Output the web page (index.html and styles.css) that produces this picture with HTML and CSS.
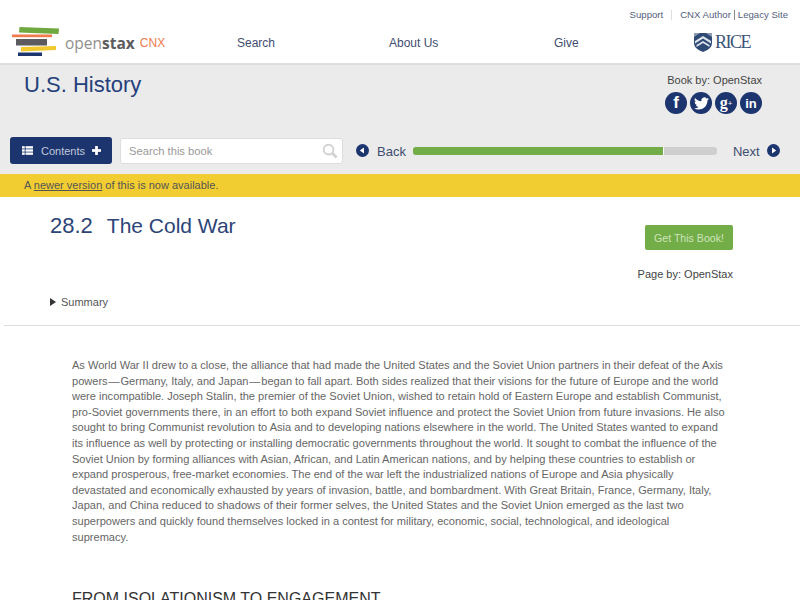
FILE: index.html
```html
<!DOCTYPE html>
<html lang="en">
<head>
  <meta charset="UTF-8">
  <title>The Cold War - U.S. History</title>
  <link rel="stylesheet" href="styles.css">
</head>
<body>

  <header class="site-header">
    <div class="top-links">
      <a href="#">Support</a>
      <span class="sep sep-light"></span>
      <a href="#">CNX Author</a>
      <span class="sep"></span>
      <a href="#">Legacy Site</a>
    </div>
    <div class="main-nav">
      <a class="logo" href="#">
        <svg class="logo-books" width="48" height="30" viewBox="0 0 48 30">
          <path d="M7.500 0 L47 1.500 L46.500 7 L7 5.500 Z" fill="#6fa83f"/>
          <rect x="0" y="7.500" width="40" height="2.700" fill="#ee7a4d"/>
          <rect x="4" y="12" width="31" height="6.500" fill="#5c5c60"/>
          <path d="M9 20 L44 19 L44 23 L9 24.500 Z" fill="#f2ca30"/>
          <rect x="6" y="25.500" width="24" height="3.500" fill="#1c356f"/>
        </svg>
        <span class="logo-open">open<b>stax</b></span>
        <span class="logo-cnx">CNX</span>
      </a>
      <nav class="nav-links">
        <a href="#">Search</a>
        <a href="#">About Us</a>
        <a href="#">Give</a>
      </nav>
      <a class="rice" href="#">
        <svg width="18" height="19" viewBox="0 0 18 19">
          <path d="M0 0 H18 V10 Q18 16 9 19 Q0 16 0 10 Z" fill="#2f4a75"/>
          <path d="M0 0 L6 0 L0 4 Z M18 0 L12 0 L18 4 Z" fill="#8d9db3"/>
          <path d="M1 8 L9 3 L17 8 V10.500 L9 5.500 L1 10.500 Z" fill="#dfe5ec"/>
          <path d="M2.500 12 L9 8 L15.500 12 V14 L9 10 L2.500 14 Z" fill="#dfe5ec"/>
        </svg>
        <span>RICE</span>
      </a>
    </div>
  </header>

  <section class="book-head">
    <h1>U.S. History</h1>
    <div class="book-by">
      <div>Book by: OpenStax</div>
      <div class="social">
        <a href="#">f</a>
        <a href="#">
          <svg width="15" height="15" viewBox="0 0 24 24" fill="#fff">
            <path d="M23.953 4.570a10 10 0 01-2.825.775 4.958 4.958 0 002.163-2.723c-.951.555-2.005.959-3.127 1.184a4.920 4.920 0 00-8.384 4.482C7.690 8.095 4.067 6.130 1.640 3.162a4.822 4.822 0 00-.666 2.475c0 1.710.870 3.213 2.188 4.096a4.904 4.904 0 01-2.228-.616v.060a4.923 4.923 0 003.946 4.827 4.996 4.996 0 01-2.212.085 4.936 4.936 0 004.604 3.417 9.867 9.867 0 01-6.102 2.105c-.390 0-.779-.023-1.170-.067a13.995 13.995 0 007.557 2.209c9.053 0 13.998-7.496 13.998-13.985 0-.210 0-.420-.015-.630A9.935 9.935 0 0024 4.590z"/>
          </svg>
        </a>
        <a href="#" class="gp">g<sup>+</sup></a>
        <a href="#" class="in">in</a>
      </div>
    </div>
  </section>

  <section class="toolbar">
    <button class="contents-btn">
      <svg width="11" height="9" viewBox="0 0 14 11" fill="#fff">
        <rect width="3.500" height="3"/><rect x="4.500" width="9.500" height="3"/>
        <rect y="4" width="3.500" height="3"/><rect x="4.500" y="4" width="9.500" height="3"/>
        <rect y="8" width="3.500" height="3"/><rect x="4.500" y="8" width="9.500" height="3"/>
      </svg>
      <span>Contents</span>
      <svg width="9" height="9" viewBox="0 0 10 10" fill="#fff">
        <rect x="3.500" width="3" height="10"/><rect y="3.500" width="10" height="3"/>
      </svg>
    </button>
    <div class="book-search">
      <span>Search this book</span>
      <svg width="16" height="16" viewBox="0 0 17 17" fill="none" stroke="#d2d2d2">
        <circle cx="7" cy="7" r="5.200" stroke-width="2"/>
        <path d="M11 11 L15.500 15.500" stroke-width="3"/>
      </svg>
    </div>
    <a class="pager back" href="#">
      <svg width="13" height="13" viewBox="0 0 13 13">
        <circle cx="6.500" cy="6.500" r="6.500" fill="#1c356f"/>
        <path d="M8 3.500 V9.500 L3.800 6.500 Z" fill="#fff"/>
      </svg>
      <span>Back</span>
    </a>
    <div class="progress"><div class="progress-fill" style="width: 82.600%"></div></div>
    <a class="pager next" href="#">
      <span>Next</span>
      <svg width="13" height="13" viewBox="0 0 13 13">
        <circle cx="6.500" cy="6.500" r="6.500" fill="#1c356f"/>
        <path d="M5 3.500 V9.500 L9.200 6.500 Z" fill="#fff"/>
      </svg>
    </a>
  </section>

  <div class="notice">A <a href="#">newer version</a> of this is now available.</div>

  <main>
    <div class="page-head">
      <h2><span class="num">28.2</span>The Cold War</h2>
      <div class="page-side">
        <a class="get-book" href="#">Get This Book!</a>
        <div class="page-by">Page by: OpenStax</div>
      </div>
    </div>
    <div class="summary"><i></i>Summary</div>

    <article class="content">
      <p>As World War II drew to a close, the alliance that had made the United States and the Soviet Union partners in their defeat of the Axis powers&#8202;—&#8202;Germany, Italy, and Japan&#8202;—&#8202;began to fall apart. Both sides realized that their visions for the future of Europe and the world were incompatible. Joseph Stalin, the premier of the Soviet Union, wished to retain hold of Eastern Europe and establish Communist, pro-Soviet governments there, in an effort to both expand Soviet influence and protect the Soviet Union from future invasions. He also sought to bring Communist revolution to Asia and to developing nations elsewhere in the world. The United States wanted to expand its influence as well by protecting or installing democratic governments throughout the world. It sought to combat the influence of the Soviet Union by forming alliances with Asian, African, and Latin American nations, and by helping these countries to establish or expand prosperous, free-market economies. The end of the war left the industrialized nations of Europe and Asia physically devastated and economically exhausted by years of invasion, battle, and bombardment. With Great Britain, France, Germany, Italy, Japan, and China reduced to shadows of their former selves, the United States and the Soviet Union emerged as the last two superpowers and quickly found themselves locked in a contest for military, economic, social, technological, and ideological supremacy.</p>
      <h3>FROM ISOLATIONISM TO ENGAGEMENT</h3>
    </article>
  </main>

</body>
</html>
```

FILE: styles.css
```css
* {
  box-sizing: border-box;
}

html, body {
  height: 600px;
  overflow: hidden;
}

body {
  margin: 0;
  font-family: "Liberation Sans", Arial, sans-serif;
  color: #555;
  background: #fff;
}

a {
  color: inherit;
  text-decoration: none;
}

.site-header {
  height: 65px;
  border-bottom: 2px solid #dedede;
  background: #fff;
}

.top-links {
  display: flex;
  justify-content: flex-end;
  align-items: center;
  height: 29px;
  padding-right: 12px;
  font-size: 9.600px;
  color: #54607e;
}

.sep {
  width: 1px;
  height: 10px;
  margin: 0 3px;
  background: #8a8a8a;
}

.sep-light {
  margin: 0 8px;
  background: #ddd;
}

.main-nav {
  display: flex;
  align-items: center;
  height: 27px;
  padding-left: 12px;
}

.logo {
  display: flex;
  align-items: center;
  flex-shrink: 0;
  width: 225px;
}

.logo-books {
  margin-top: -1px;
}

.logo-open {
  margin-left: 5px;
  font-family: "Open Sans", sans-serif;
  font-size: 15.500px;
  color: #8f8f8f;
}

.logo-open b {
  color: #5c5c60;
}

.logo-cnx {
  margin-left: 5px;
  font-size: 12px;
  color: #ee7a4d;
}

.nav-links {
  display: flex;
  font-size: 12px;
  color: #3f4d70;
}

.nav-links a:nth-child(1) {
  width: 152px;
}

.nav-links a:nth-child(2) {
  width: 165px;
}

.nav-links a:nth-child(3) {
  width: 140px;
}

.rice {
  display: flex;
  align-items: center;
  gap: 3px;
  font-family: "Liberation Serif", serif;
  font-size: 18px;
  letter-spacing: -1.500px;
  color: #3c5578;
}

.book-head {
  display: flex;
  justify-content: space-between;
  height: 60px;
  padding: 7px 38px 0 24px;
  background: #ebebeb;
}

.book-head h1 {
  margin: 0;
  font-size: 22px;
  font-weight: 400;
  color: #25407a;
}

.book-by {
  padding-top: 2px;
  font-size: 11px;
  text-align: right;
  color: #444;
}

.social {
  display: flex;
  justify-content: flex-end;
  gap: 3px;
  margin-top: 6px;
}

.social a {
  display: flex;
  align-items: center;
  justify-content: center;
  width: 22px;
  height: 22px;
  border-radius: 50%;
  background: #1c356f;
  font-weight: 700;
  font-size: 17px;
  color: #fff;
}

.social .gp {
  font-family: "Liberation Serif", serif;
  font-size: 16px;
}

.social .gp sup {
  font-size: 8px;
}

.social .in {
  font-size: 13px;
}

.toolbar {
  display: flex;
  align-items: center;
  height: 49px;
  padding: 2px 0 0 10px;
  background: #ebebeb;
}

.contents-btn {
  display: flex;
  align-items: center;
  flex-shrink: 0;
  width: 102px;
  height: 27px;
  padding: 0 0 0 12px;
  border: none;
  border-radius: 3px;
  background: #1c356f;
  font-family: inherit;
  font-size: 11px;
  color: #c0c8da;
}

.contents-btn span {
  margin: 0 7px 0 8px;
}

.book-search {
  display: flex;
  align-items: center;
  justify-content: space-between;
  flex-shrink: 0;
  width: 223px;
  height: 26px;
  margin-left: 8px;
  padding: 0 4px 0 8px;
  border: 1px solid #ddd;
  border-radius: 3px;
  background: #fff;
  font-size: 11.200px;
  color: #999;
}

.pager {
  display: flex;
  align-items: center;
  flex-shrink: 0;
  font-size: 13px;
  color: #3f4d70;
}

.back {
  gap: 8px;
  margin-left: 13px;
}

.next {
  gap: 7px;
  margin-left: 16px;
}

.pager span {
  padding-top: 2px;
}

.progress {
  flex-shrink: 0;
  width: 304px;
  height: 8px;
  margin-left: 7px;
  border-radius: 3px;
  overflow: hidden;
  background: #cfcfcf;
}

.progress-fill {
  height: 100%;
  background: #72ad48;
  border-right: 1px solid #fff;
}

.notice {
  height: 23px;
  padding: 5px 0 0 24px;
  background: #f2cd32;
  font-size: 11px;
  color: #555;
}

.notice a {
  text-decoration: underline;
}

.page-head {
  display: flex;
  justify-content: space-between;
  padding: 16px 67px 0 50px;
}

.page-head h2 {
  margin: 0;
  font-size: 21px;
  font-weight: 400;
  color: #2c4478;
}

.page-head .num {
  margin-right: 14px;
  font-size: 22px;
}

.page-side {
  display: flex;
  flex-direction: column;
  align-items: flex-end;
  padding-top: 12px;
}

.get-book {
  display: flex;
  align-items: center;
  justify-content: center;
  width: 88px;
  height: 25px;
  border-radius: 2px;
  background: #72ad48;
  font-size: 10.600px;
  color: #cfe3bd;
}

.page-by {
  margin-top: 18px;
  font-size: 11px;
  color: #444;
}

.summary {
  display: flex;
  align-items: center;
  gap: 5px;
  height: 46px;
  margin: 0 0 0 4px;
  padding-left: 46px;
  padding-bottom: 2px;
  border-bottom: 1px solid #ddd;
  font-size: 11px;
  color: #555;
}

.summary i {
  width: 0;
  height: 0;
  border-left: 6px solid #333;
  border-top: 4px solid transparent;
  border-bottom: 4px solid transparent;
}

.content {
  padding: 32px 73px 0 72px;
}

.content p {
  margin: 0;
  font-size: 11.050px;
  line-height: 15.600px;
  color: #666;
}

.content h3 {
  margin: 45px 0 0;
  font-size: 16px;
  font-weight: 400;
  color: #333;
}
```
